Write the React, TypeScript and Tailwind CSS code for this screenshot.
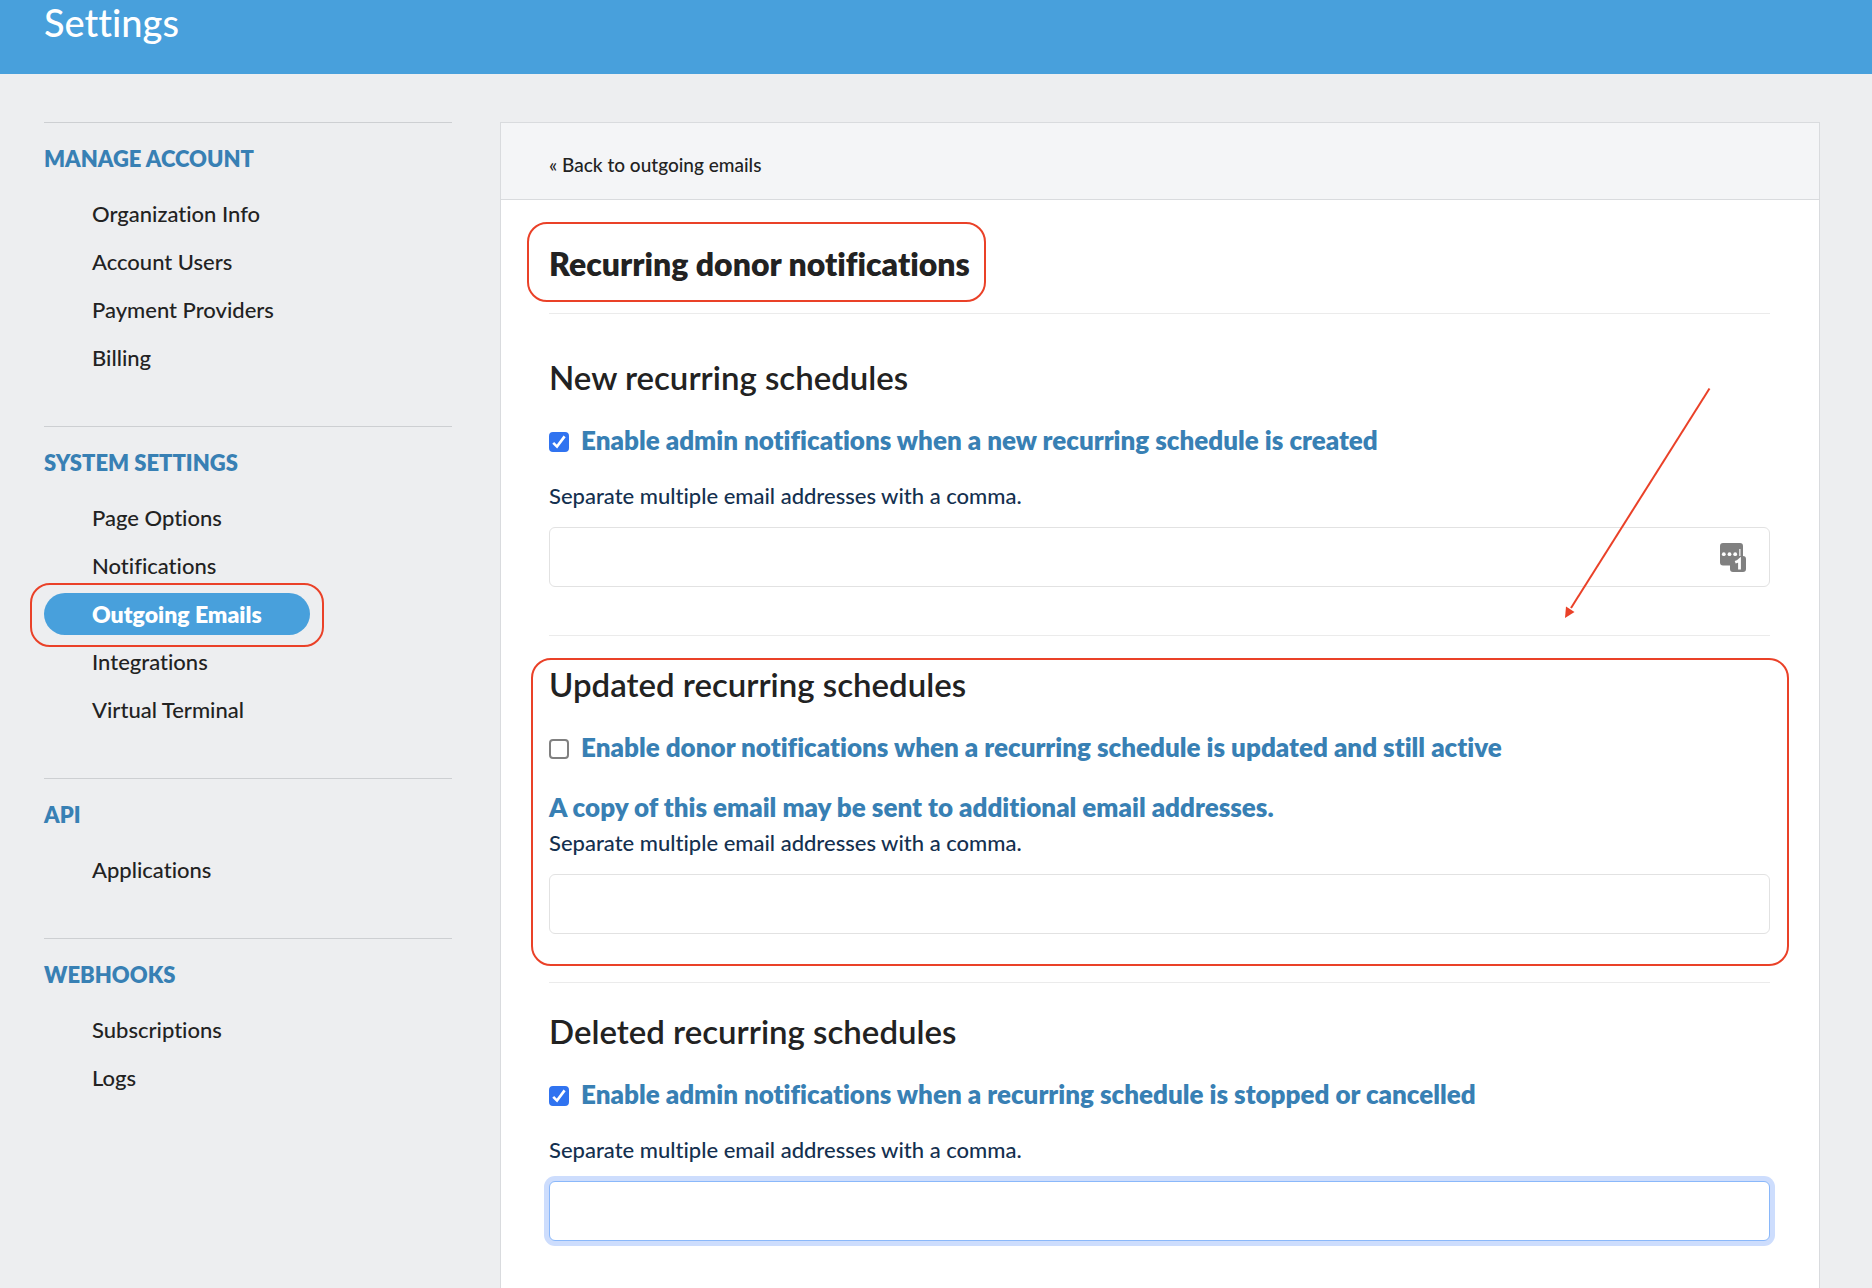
const navGroups = [
  { title: 'MANAGE ACCOUNT', items: ['Organization Info', 'Account Users', 'Payment Providers', 'Billing'] },
  {
    title: 'SYSTEM SETTINGS',
    items: ['Page Options', 'Notifications', 'Outgoing Emails', 'Integrations', 'Virtual Terminal'],
  },
  { title: 'API', items: ['Applications'] },
  { title: 'WEBHOOKS', items: ['Subscriptions', 'Logs'] },
];

const activeItem = 'Outgoing Emails';

type Schedule = {
  id: string;
  title: string;
  label: string;
  enabled: boolean;
  copyNote?: string;
  badge?: boolean;
  focused?: boolean;
  highlighted?: boolean;
};

const schedules: Schedule[] = [
  {
    id: 'new',
    title: 'New recurring schedules',
    label: 'Enable admin notifications when a new recurring schedule is created',
    enabled: true,
    badge: true,
  },
  {
    id: 'updated',
    title: 'Updated recurring schedules',
    label: 'Enable donor notifications when a recurring schedule is updated and still active',
    enabled: false,
    copyNote: 'A copy of this email may be sent to additional email addresses.',
    highlighted: true,
  },
  {
    id: 'deleted',
    title: 'Deleted recurring schedules',
    label: 'Enable admin notifications when a recurring schedule is stopped or cancelled',
    enabled: true,
    focused: true,
  },
];

function Sidebar() {
  return (
    <nav className="w-[408px] shrink-0" aria-label="Settings">
      {navGroups.map((group) => (
        <section key={group.title} className="border-t border-[#cdcfd2] pt-5 pb-11">
          <h2 className="mb-4 text-[22px] leading-[31px] font-extrabold text-[#3880b4]">{group.title}</h2>
          <ul>
            {group.items.map((item) => (
              <li key={item} className="flex h-12 items-center">
                {item === activeItem ? (
                  <a
                    href="#"
                    aria-current="page"
                    className="relative rounded-full bg-[#48a0dc] px-12 text-[23px] leading-[42px] font-extrabold text-white"
                  >
                    {item}
                    <span className="pointer-events-none absolute -inset-x-3.5 -top-2.5 -bottom-3 rounded-[20px] border-2 border-[#ea4128]" />
                  </a>
                ) : (
                  <a href="#" className="px-12 text-[22px] leading-[42px] font-medium text-[#222222]">
                    {item}
                  </a>
                )}
              </li>
            ))}
          </ul>
        </section>
      ))}
    </nav>
  );
}

function Checkbox({ id, checked }: { id: string; checked: boolean }) {
  return (
    <span className="relative mt-1 flex h-5 w-5 shrink-0">
      <input
        id={id}
        type="checkbox"
        defaultChecked={checked}
        className="peer h-5 w-5 appearance-none rounded-[4px] border-2 border-[#808080] bg-white checked:border-[#3073f0] checked:bg-[#3073f0]"
      />
      <svg
        viewBox="0 0 20 20"
        className="pointer-events-none absolute inset-0 hidden h-5 w-5 peer-checked:block"
        fill="none"
        stroke="white"
        strokeWidth="2.6"
      >
        <path d="M4.2 10.8 8 14.6 15.6 4.4" />
      </svg>
    </span>
  );
}

function PasswordManagerIcon() {
  return (
    <svg viewBox="0 0 26 29" className="pointer-events-none absolute top-4 right-6 h-[29px] w-[26px]">
      <path
        fill="#808080"
        d="M3 0H20Q23 0 23 3V13Q26 13 26 16V26Q26 29 23 29H13Q10 29 10 26V22.500H3Q0 22.500 0 19.500V3Q0 0 3 0Z"
      />
      <circle cx="3.800" cy="11.200" r="1.900" fill="white" />
      <circle cx="9.500" cy="11.200" r="1.900" fill="white" />
      <circle cx="15.200" cy="11.200" r="1.900" fill="white" />
      <rect x="19" y="6" width="1.600" height="7" fill="#dddddd" />
      <path fill="none" stroke="white" strokeWidth="2.800" d="M15.200 19.200 17.800 18.300 19.500 16.800V26.600" />
    </svg>
  );
}

function ScheduleSection({ schedule, first }: { schedule: Schedule; first: boolean }) {
  return (
    <section className={first ? 'relative pt-[43px] pb-12' : 'relative border-t border-[#ebebeb] pt-7 pb-12'}>
      {schedule.highlighted && (
        <div className="pointer-events-none absolute top-[22px] -right-[19px] bottom-4 -left-[18px] rounded-[20px] border-2 border-[#ea4128]" />
      )}
      <h3 className="text-[33px] leading-10 font-semibold text-[#222222]">{schedule.title}</h3>
      <label
        htmlFor={schedule.id}
        className="mt-[27px] flex items-center gap-3 text-[26px] leading-8 font-extrabold text-[#3880b4]"
      >
        <Checkbox id={schedule.id} checked={schedule.enabled} />
        {schedule.label}
      </label>
      {schedule.copyNote ? (
        <p className="mt-7 mb-[5px] text-[26px] leading-8 font-extrabold text-[#3880b4]">{schedule.copyNote}</p>
      ) : (
        <div className="h-[25px]" />
      )}
      <label htmlFor={`${schedule.id}-emails`} className="block text-[22px] leading-[30px] font-medium text-[#14304f]">
        Separate multiple email addresses with a comma.
      </label>
      <div className="relative mt-4">
        <input
          id={`${schedule.id}-emails`}
          type="text"
          className={
            schedule.focused
              ? 'block h-[60px] w-full rounded-md border border-[#8ab8fa] bg-white px-4 text-[22px] ring-5 ring-[#cdddfd] outline-none'
              : 'block h-[60px] w-full rounded-md border border-[#e2e2e2] bg-white px-4 text-[22px] outline-none'
          }
        />
        {schedule.badge && <PasswordManagerIcon />}
      </div>
    </section>
  );
}

function Arrow() {
  return (
    <svg
      viewBox="0 0 146 232"
      className="pointer-events-none absolute top-[264px] right-[108px] h-[232px] w-[146px]"
      fill="#ea4128"
    >
      <path d="M144.500 1.500 6 221" stroke="#ea4128" strokeWidth="2" />
      <path d="M0 231 1 219.500 9.500 225Z" />
    </svg>
  );
}

export default function App() {
  return (
    <div className="flex min-h-screen flex-col bg-[#edeef0] font-['Lato','Open_Sans',sans-serif] [font-variant-ligatures:no-common-ligatures]">
      <header className="bg-[#48a0dc] px-11 pb-[30px]">
        <h1 className="text-[38px] leading-[44px] font-medium text-white">Settings</h1>
      </header>
      <div className="flex flex-1 gap-12 pt-12 pr-[52px] pl-11">
        <Sidebar />
        <main className="relative min-w-0 flex-1 border border-b-0 border-[#d9dbde] bg-white">
          <div className="border-b border-[#d9dbde] bg-[#f4f5f7] px-12 pt-[27px] pb-[19px]">
            <a href="#" className="text-[19px] leading-[30px] font-medium text-[#222222]">
              « Back to outgoing emails
            </a>
          </div>
          <div className="pr-[49px] pl-12">
            <div className="border-b border-[#ebebeb] pt-11 pb-[29px]">
              <h2 className="relative w-fit text-[32px] leading-10 font-extrabold text-[#222222]">
                Recurring donor notifications
                <span className="pointer-events-none absolute -top-[22px] -right-4 -bottom-[18px] -left-[22px] rounded-[20px] border-2 border-[#ea4128]" />
              </h2>
            </div>
            {schedules.map((schedule, index) => (
              <ScheduleSection key={schedule.id} schedule={schedule} first={index === 0} />
            ))}
          </div>
          <Arrow />
        </main>
      </div>
    </div>
  );
}
